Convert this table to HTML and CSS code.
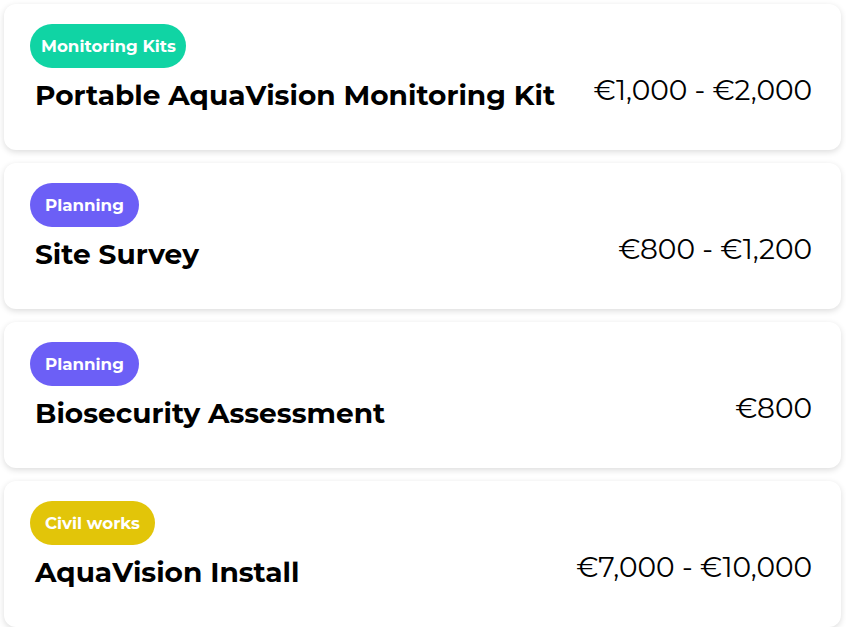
FILE: index.html
```
<!DOCTYPE html>
<html lang="en">
<head>
  <meta charset="UTF-8">
  <meta name="viewport" content="width=device-width, initial-scale=1.0">
  <title>Services</title>
  <link rel="stylesheet" href="styles.css">
</head>
<body>
  <div class="list">
    <div class="card">
      <span class="tag tag-kits">Monitoring Kits</span>
      <div class="row">
        <div class="title">Portable AquaVision Monitoring Kit</div>
        <div class="price">€1,000 - €2,000</div>
      </div>
    </div>
    <div class="card">
      <span class="tag tag-planning">Planning</span>
      <div class="row">
        <div class="title">Site Survey</div>
        <div class="price">€800 - €1,200</div>
      </div>
    </div>
    <div class="card">
      <span class="tag tag-planning">Planning</span>
      <div class="row">
        <div class="title">Biosecurity Assessment</div>
        <div class="price">€800</div>
      </div>
    </div>
    <div class="card">
      <span class="tag tag-civil">Civil works</span>
      <div class="row">
        <div class="title">AquaVision Install</div>
        <div class="price">€7,000 - €10,000</div>
      </div>
    </div>
  </div>
</body>
</html>
```

FILE: styles.css
```
body {
  margin: 0;
  padding: 0;
  background: #fff;
  font-family: Montserrat, "DejaVu Sans", sans-serif;
  color: #000;
}

.list {
  display: flex;
  flex-direction: column;
  gap: 13px;
  padding: 4px 5px 0 4px;
}

.card {
  background: #fff;
  border-radius: 12px;
  box-shadow: 0 2px 6px rgba(0, 0, 0, 0.14);
  padding: 20px 29px 38px 26px;
  display: flex;
  flex-direction: column;
  align-items: flex-start;
}

.tag {
  display: inline-flex;
  align-items: center;
  height: 44px;
  padding: 0 15px;
  border-radius: 22px;
  color: #fff;
  font-size: 16.7px;
  font-weight: bold;
  box-sizing: border-box;
}

.tag-kits {
  background: #10d4a4;
  padding: 0 10px 0 11px;
}

.tag-planning {
  background: #6c5ff6;
}

.tag-civil {
  background: #e2c509;
}

.row {
  align-self: stretch;
  display: flex;
  justify-content: space-between;
  align-items: flex-start;
  margin-top: 10px;
  padding-left: 5px;
}

.title {
  font-size: 28px;
  font-weight: bold;
  line-height: 34px;
}

.price {
  font-size: 28px;
  line-height: 25px;
}
```
